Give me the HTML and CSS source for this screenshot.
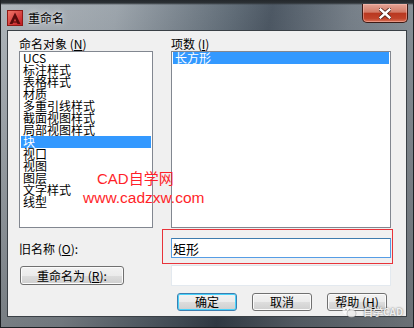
FILE: index.html
```html
<!DOCTYPE html>
<html>
<head>
  <title>重命名</title>
  <link rel="stylesheet" href="styles.css">
</head>
<body>
  <div class="window">
    <div class="titlebar">
      <div class="title">
        <svg class="app-icon" width="16" height="16" viewBox="0 0 16 16">
          <defs>
            <linearGradient id="ig" x1="0" y1="0" x2="1" y2="1">
              <stop offset="0" stop-color="#f2796b"/>
              <stop offset="1" stop-color="#c0171f"/>
            </linearGradient>
          </defs>
          <rect x="0.5" y="0.5" width="15" height="15" fill="url(#ig)" stroke="#8e1a16"/>
          <path d="M8 2.5 L2.5 14 H5.5 L8 8.5 L10.5 14 H13.5 Z" fill="#5b0c0c"/>
          <path d="M5 12 H11" stroke="#5b0c0c" stroke-width="1.2"/>
        </svg>
        <span>重命名</span>
      </div>
      <button class="close">
        <svg width="12" height="11" viewBox="0 0 12 11">
          <path d="M1.5 1.5 L10.5 9.5 M10.5 1.5 L1.5 9.5" stroke="#4a1a12" stroke-width="4" stroke-linecap="square"/>
          <path d="M1.5 1.5 L10.5 9.5 M10.5 1.5 L1.5 9.5" stroke="#fff" stroke-width="2.4" stroke-linecap="square"/>
        </svg>
      </button>
    </div>

    <div class="client">
      <div class="panes">
        <div class="pane pane-left">
          <div class="label">命名对象 (<u>N</u>)</div>
          <ul class="list">
            <li>UCS</li>
            <li>标注样式</li>
            <li>表格样式</li>
            <li>材质</li>
            <li>多重引线样式</li>
            <li>截面视图样式</li>
            <li>局部视图样式</li>
            <li class="selected">块</li>
            <li>视口</li>
            <li>视图</li>
            <li>图层</li>
            <li>文字样式</li>
            <li>线型</li>
          </ul>
        </div>
        <div class="pane pane-right">
          <div class="label">项数 (<u>I</u>)</div>
          <ul class="list">
            <li class="selected">长方形</li>
          </ul>
        </div>
      </div>

      <div class="row row-old">
        <div class="field-label">旧名称 (<u>O</u>):</div>
        <input class="textbox focused" type="text" value="矩形">
      </div>
      <div class="row row-new">
        <div class="field-label"><button class="btn btn-rename">重命名为 (<u>R</u>):</button></div>
        <input class="textbox plain" type="text" value="">
      </div>
      <div class="row row-actions">
        <button class="btn btn-default">确定</button>
        <button class="btn">取消</button>
        <button class="btn">帮助 (<u>H</u>)</button>
      </div>

      <div class="mark-box"></div>
      <div class="watermark">
        <div class="wm-line1">CAD自学网</div>
        <div class="wm-line2">www.cadzxw.com</div>
      </div>
    </div>

    <div class="badge">
      <svg width="15" height="13" viewBox="0 0 15 13">
        <ellipse cx="6" cy="5.5" rx="5.5" ry="4.5" fill="rgba(255,255,255,0.75)"/>
        <ellipse cx="9.5" cy="8.5" rx="4.5" ry="3.7" fill="rgba(235,235,235,0.85)" stroke="rgba(120,120,120,0.6)" stroke-width="0.6"/>
        <circle cx="4" cy="4.5" r="0.8" fill="#999"/>
        <circle cx="7.5" cy="4.5" r="0.8" fill="#999"/>
      </svg>
      <span>自学CAD</span>
    </div>
  </div>
</body>
</html>
```

FILE: styles.css
```css
* { box-sizing: border-box; margin: 0; padding: 0; }
body {
  font-family: "Noto Sans CJK SC", "Liberation Sans", sans-serif;
  font-size: 12px;
  color: #000;
  background: #2a2e33;
}

.window {
  position: relative;
  width: 414px;
  height: 328px;
  display: flex;
  flex-direction: column;
  border: 1px solid #1d2024;
  border-top: 0;
  background:
    linear-gradient(to bottom, #24282c 0, #2c3135 3px, rgba(0,0,0,0) 5px),
    linear-gradient(to bottom, rgba(255,255,255,0.08), rgba(0,0,0,0.25)),
    linear-gradient(100deg, #a9b0b6 0%, #959ea6 25%, #54616d 50%, #3f4b58 58%, #6c7680 75%, #8d959c 100%);
}

/* title bar */
.titlebar {
  height: 30px;
  display: flex;
  justify-content: space-between;
  align-items: flex-start;
}
.title {
  display: flex;
  align-items: center;
  gap: 5px;
  padding: 9px 0 0 6px;
  font-size: 12px;
  text-shadow: 0 0 6px rgba(255,255,255,0.8), 0 0 2px rgba(255,255,255,0.6);
}
.close {
  width: 46px;
  height: 19px;
  margin: 4px 5px 0 0;
  border: 1px solid #3d1a14;
  border-top: 0;
  border-radius: 0 0 5px 5px;
  background: linear-gradient(to bottom, #e4a496 0%, #d27b67 45%, #b93820 52%, #c0432a 80%, #d9745a 100%);
  box-shadow: inset 0 0 0 1px rgba(255,200,190,0.45);
  display: flex;
  align-items: center;
  justify-content: center;
}

/* client area */
.client {
  position: relative;
  flex: 1;
  margin: 0 6px 10px 6px;
  background: #f0f0f0;
  border: 1px solid #3a4046;
  padding: 6px 15px 0 11px;
}

.panes {
  display: flex;
  gap: 18px;
}
.pane-left { width: 134px; }
.pane-right { width: 220px; }
.label {
  height: 14px;
  line-height: 14px;
}
.list {
  list-style: none;
  height: 177px;
  background: #fff;
  border: 1px solid #828790;
}
.list li {
  height: 12px;
  line-height: 12px;
  margin: 0 1px;
  padding-left: 2px;
  white-space: nowrap;
}
.list li.selected {
  background: #3399ff;
  color: #fff;
}

.row {
  display: flex;
  align-items: center;
}
.field-label { width: 152px; }
.row-old { margin-top: 10px; height: 20px; }
.row-new { margin-top: 7px; height: 21px; }
.row-actions {
  margin-top: 7px;
  height: 18px;
  justify-content: flex-end;
  gap: 15px;
  padding-right: 4px;
}

.textbox {
  width: 220px;
  border: 1px solid #abadb3;
  background: #fff;
  font-family: "Noto Sans CJK SC", sans-serif;
  color: #000;
  outline: none;
}
.textbox.focused {
  height: 20px;
  font-size: 13px;
  padding-left: 1px;
  border-color: #569de5;
  border-top-color: #3d7bad;
}
.textbox.plain {
  height: 21px;
  border-color: #e3e9ef;
  border-top-color: #dfe3e8;
}

.btn {
  width: 60px;
  height: 18px;
  border: 1px solid #707070;
  border-radius: 3px;
  background: linear-gradient(to bottom, #f2f2f2 0%, #ebebeb 50%, #dddddd 51%, #cfcfcf 100%);
  box-shadow: inset 0 0 0 1px #fbfbfb;
  font-family: "Noto Sans CJK SC", sans-serif;
  font-size: 12px;
  line-height: 14px;
  color: #000;
}
.btn-default {
  border-color: #3c7fb1;
  box-shadow: inset 0 0 0 1px #48d2fa;
}
.btn-rename {
  width: 104px;
  height: 19px;
  margin-left: 1px;
}

/* annotations laid over the dialog */
.mark-box {
  position: absolute;
  left: 154px;
  top: 198px;
  width: 231px;
  height: 35px;
  border: 1px solid #e8333a;
}
.watermark {
  position: absolute;
  left: 75px;
  top: 138px;
  color: #ff1f2a;
  font-family: "Liberation Sans", "Noto Sans CJK SC", sans-serif;
  font-size: 15.5px;
  line-height: 19px;
}
.wm-line1 { padding-left: 14px; font-size: 15px; }

.badge {
  position: absolute;
  left: 341px;
  top: 304px;
  display: flex;
  align-items: center;
  gap: 6px;
  font-size: 10px;
  font-weight: bold;
  color: rgba(255,255,255,0.85);
  text-shadow: 0 0 2px rgba(80,80,80,0.9);
}
```
